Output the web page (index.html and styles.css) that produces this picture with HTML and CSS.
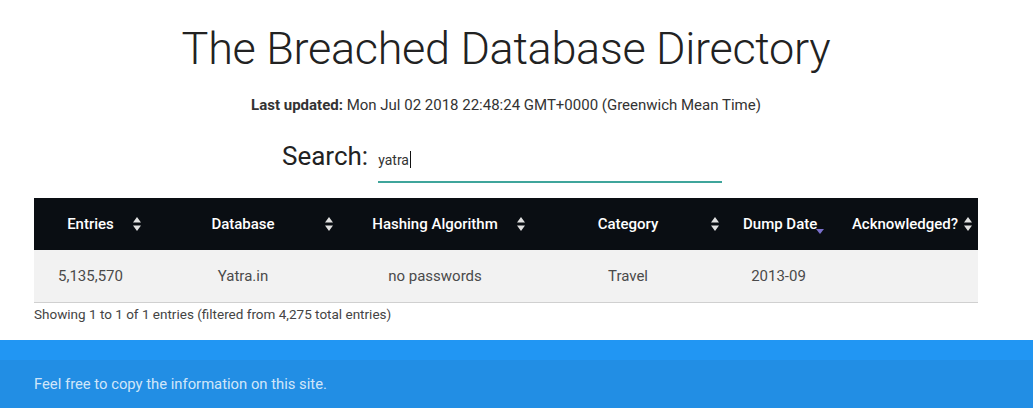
FILE: index.html
```html
<!DOCTYPE html>
<html lang="en">
<head>
<meta charset="utf-8">
<title>The Breached Database Directory</title>
<link rel="stylesheet" href="styles.css">
</head>
<body>
<main class="container">
  <h1 class="title">The Breached Database Directory</h1>
  <p class="updated"><strong>Last updated:</strong> Mon Jul 02 2018 22:48:24 GMT+0000 (Greenwich Mean Time)</p>
  <div class="search-row">
    <label class="search-label">Search:</label>
    <div class="search-input"><span class="search-value">yatra</span><span class="caret"></span></div>
  </div>
  <table class="breaches">
    <colgroup>
      <col class="c-entries">
      <col class="c-db">
      <col class="c-hash">
      <col class="c-cat">
      <col class="c-date">
      <col class="c-ack">
    </colgroup>
    <thead>
      <tr>
        <th class="sortable">Entries<svg class="sort" viewBox="0 0 8 14" width="8" height="14"><path d="M4 0 L8 5.5 H0 Z M0 8.5 H8 L4 14 Z"/></svg></th>
        <th class="sortable">Database<svg class="sort" viewBox="0 0 8 14" width="8" height="14"><path d="M4 0 L8 5.5 H0 Z M0 8.5 H8 L4 14 Z"/></svg></th>
        <th class="sortable">Hashing Algorithm<svg class="sort" viewBox="0 0 8 14" width="8" height="14"><path d="M4 0 L8 5.5 H0 Z M0 8.5 H8 L4 14 Z"/></svg></th>
        <th class="sortable">Category<svg class="sort" viewBox="0 0 8 14" width="8" height="14"><path d="M4 0 L8 5.5 H0 Z M0 8.5 H8 L4 14 Z"/></svg></th>
        <th class="sortable">Dump Date<svg class="sort-desc" viewBox="0 0 8 5" width="8" height="5"><path d="M0 0 H8 L4 5 Z"/></svg></th>
        <th class="sortable">Acknowledged?<svg class="sort" viewBox="0 0 8 14" width="8" height="14"><path d="M4 0 L8 5.5 H0 Z M0 8.5 H8 L4 14 Z"/></svg></th>
      </tr>
    </thead>
    <tbody>
      <tr>
        <td>5,135,570</td>
        <td>Yatra.in</td>
        <td>no passwords</td>
        <td>Travel</td>
        <td>2013-09</td>
        <td></td>
      </tr>
    </tbody>
  </table>
  <div class="info">Showing 1 to 1 of 1 entries (filtered from 4,275 total entries)</div>
</main>
<footer class="page-footer">
  <div class="footer-copyright">
    <div class="container">Feel free to copy the information on this site.</div>
  </div>
</footer>
</body>
</html>
```

FILE: styles.css
```css
html, body {
  margin: 0;
  padding: 0;
  background: #fff;
}
body {
  font-family: Roboto, "Noto Sans", sans-serif;
  color: rgba(0, 0, 0, 0.87);
}
.container {
  width: 944px;
  margin: 0 0 0 34px;
}
.title {
  margin: 0;
  padding-top: 24px;
  font-size: 45px;
  line-height: 1.1;
  font-weight: 300;
  letter-spacing: -0.3px;
  text-align: center;
  color: #222;
}
.updated {
  margin: 21px 0 0;
  font-size: 15px;
  line-height: 20px;
  text-align: center;
  color: #333;
}
.updated strong {
  font-weight: 700;
}
.search-row {
  display: flex;
  align-items: flex-start;
  margin: 26px 0 0 248px;
}
.search-label {
  font-size: 26px;
  line-height: 30px;
  color: #222;
  padding-right: 10px;
}
.search-input {
  width: 344px;
  box-sizing: border-box;
  padding: 9px 0 11px;
  line-height: 20px;
  font-size: 14px;
  color: #333;
  border-bottom: 2px solid #3fa59b;
  display: flex;
  align-items: center;
}
.caret {
  display: inline-block;
  width: 1px;
  height: 17px;
  background: #111;
  margin-left: 1px;
}
.breaches {
  margin-top: 15px;
  width: 944px;
  border-collapse: collapse;
  table-layout: fixed;
  font-size: 15px;
}
.c-entries { width: 113px; }
.c-db { width: 192px; }
.c-hash { width: 192px; }
.c-cat { width: 194px; }
.c-date { width: 107px; }
.c-ack { width: 146px; }
.breaches thead tr {
  background: #0a0e13;
}
.breaches th {
  position: relative;
  height: 52px;
  padding: 0 18px;
  box-sizing: border-box;
  color: #fff;
  font-weight: 500;
  text-align: center;
  white-space: nowrap;
}
.sort {
  position: absolute;
  right: 6px;
  top: 19px;
  fill: #e0e0e0;
}
.sort-desc {
  position: absolute;
  right: 8px;
  top: 31px;
  fill: #7a70cc;
}
.breaches tbody tr {
  background: #f2f2f2;
  border-bottom: 1px solid #d0d0d0;
}
.breaches td {
  height: 53px;
  padding: 0 18px;
  box-sizing: border-box;
  text-align: center;
  color: #4a4a4a;
}
.info {
  margin-top: 2px;
  font-size: 13.5px;
  line-height: 18px;
  color: #444;
}
.page-footer {
  margin-top: 17px;
  padding-top: 20px;
  background: #2196f3;
}
.footer-copyright {
  background: rgba(51, 51, 51, 0.08);
  height: 50px;
  line-height: 48px;
  font-size: 14.8px;
  color: rgba(255, 255, 255, 0.8);
}
```
